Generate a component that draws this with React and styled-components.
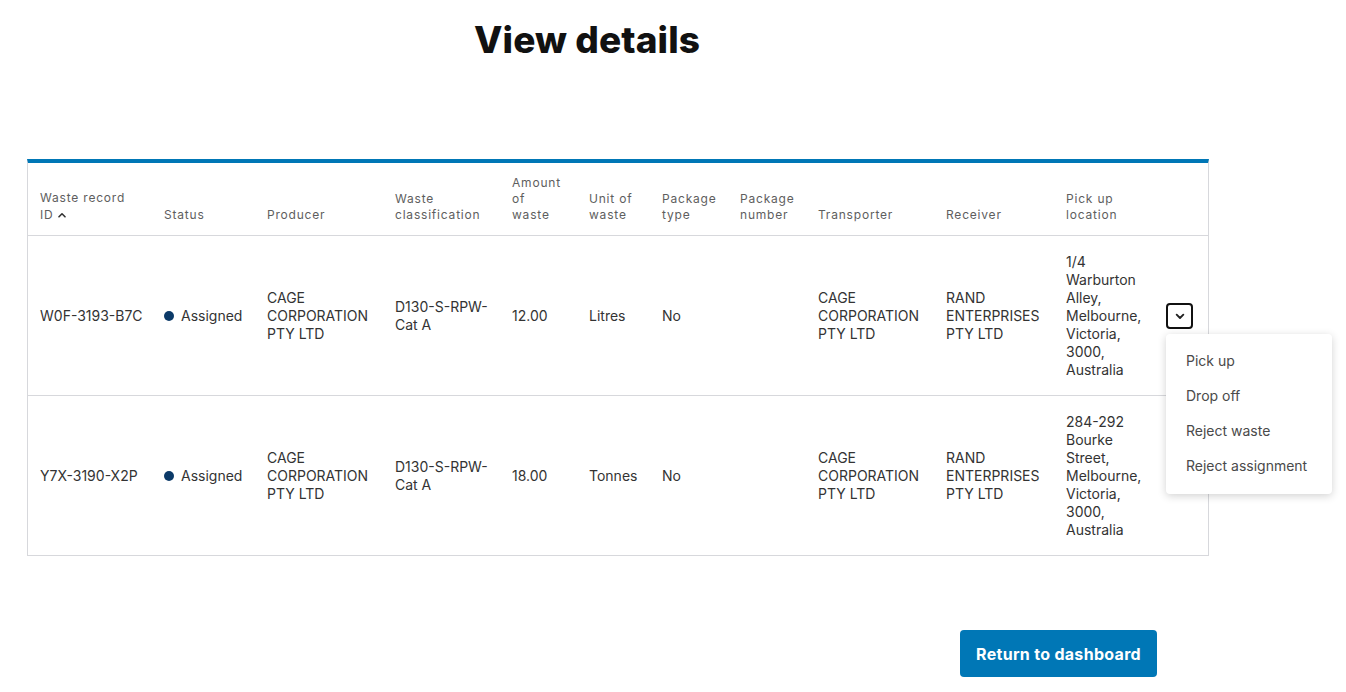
import { useState } from "react";
import styled, { createGlobalStyle } from "styled-components";

const GlobalStyle = createGlobalStyle`
  body {
    margin: 0;
    background: #ffffff;
    font-family: Inter, "Liberation Sans", Arial, sans-serif;
    color: #333333;
  }
`;

const columns = [
  { label: "Waste record ID", width: 124, sort: true },
  { label: "Status", width: 103 },
  { label: "Producer", width: 128 },
  { label: "Waste classification", width: 117 },
  { label: "Amount of waste", width: 77 },
  { label: "Unit of waste", width: 73 },
  { label: "Package type", width: 78 },
  { label: "Package number", width: 78 },
  { label: "Transporter", width: 128 },
  { label: "Receiver", width: 120 },
  { label: "Pick up location", width: 102 },
  { label: "", width: 52 },
];

const rows = [
  {
    id: "W0F-3193-B7C",
    status: "Assigned",
    producer: "CAGE CORPORATION PTY LTD",
    classification: "D130-S-RPW-Cat A",
    amount: "12.00",
    unit: "Litres",
    packageType: "No",
    packageNumber: "",
    transporter: "CAGE CORPORATION PTY LTD",
    receiver: "RAND ENTERPRISES PTY LTD",
    location: "1/4 Warburton Alley, Melbourne, Victoria, 3000, Australia",
  },
  {
    id: "Y7X-3190-X2P",
    status: "Assigned",
    producer: "CAGE CORPORATION PTY LTD",
    classification: "D130-S-RPW-Cat A",
    amount: "18.00",
    unit: "Tonnes",
    packageType: "No",
    packageNumber: "",
    transporter: "CAGE CORPORATION PTY LTD",
    receiver: "RAND ENTERPRISES PTY LTD",
    location: "284-292 Bourke Street, Melbourne, Victoria, 3000, Australia",
  },
];

const actions = ["Pick up", "Drop off", "Reject waste", "Reject assignment"];

const App = () => {
  const [openRow, setOpenRow] = useState(0);

  return (
    <>
      <GlobalStyle />
      <Page>
        <Title>View details</Title>
        <TableWrap>
          <Table>
            <colgroup>
              {columns.map((col, index) => (
                <col key={index} style={{ width: col.width }} />
              ))}
            </colgroup>
            <thead>
              <tr>
                {columns.map((col, index) => (
                  <HeadCell key={index}>
                    {col.label}
                    {col.sort && (
                      <SortArrow>
                        <svg width="8" height="6" viewBox="0 0 8 6" fill="none">
                          <path
                            d="M1 4.8L4 1.8l3 3"
                            stroke="#333"
                            strokeWidth="1.6"
                            strokeLinecap="round"
                            strokeLinejoin="round"
                          />
                        </svg>
                      </SortArrow>
                    )}
                  </HeadCell>
                ))}
              </tr>
            </thead>
            <tbody>
              {rows.map((row, index) => (
                <Row key={row.id}>
                  <Cell $nowrap>{row.id}</Cell>
                  <Cell>
                    <Status>
                      <Dot />
                      {row.status}
                    </Status>
                  </Cell>
                  <Cell>{row.producer}</Cell>
                  <Cell>{row.classification}</Cell>
                  <Cell>{row.amount}</Cell>
                  <Cell>{row.unit}</Cell>
                  <Cell>{row.packageType}</Cell>
                  <Cell>{row.packageNumber}</Cell>
                  <Cell>{row.transporter}</Cell>
                  <Cell>{row.receiver}</Cell>
                  <Cell>{row.location}</Cell>
                  <ActionCell>
                    <MenuAnchor>
                      <ToggleButton
                        $active={openRow === index}
                        onClick={() =>
                          setOpenRow(openRow === index ? -1 : index)
                        }
                      >
                        <svg width="16" height="16" viewBox="0 0 24 24" fill="none">
                          <path
                            d="M7 10l5 5 5-5"
                            stroke="#222"
                            strokeWidth="2.8"
                            strokeLinecap="round"
                            strokeLinejoin="round"
                          />
                        </svg>
                      </ToggleButton>
                      {openRow === index && (
                        <Menu>
                          {actions.map((action) => (
                            <MenuItem key={action}>{action}</MenuItem>
                          ))}
                        </Menu>
                      )}
                    </MenuAnchor>
                  </ActionCell>
                </Row>
              ))}
            </tbody>
          </Table>
        </TableWrap>
        <Footer>
          <PrimaryButton>Return to dashboard</PrimaryButton>
        </Footer>
      </Page>
    </>
  );
};

const Page = styled.div`
  width: 1182px;
  padding: 18px 0 0 27px;
  display: flex;
  flex-direction: column;
`;

const Title = styled.h1`
  margin: 0 0 0 447px;
  font-size: 37px;
  line-height: 44px;
  font-weight: 800;
  color: #111111;
  letter-spacing: 0.1px;
`;

const TableWrap = styled.div`
  margin-top: 97px;
  border-top: 4px solid #0077b6;
  border-left: 1px solid #d7d8dc;
  border-right: 1px solid #d7d8dc;
  border-bottom: 1px solid #d7d8dc;
`;

const Table = styled.table`
  width: 100%;
  table-layout: fixed;
  border-collapse: collapse;
`;

const HeadCell = styled.th`
  text-align: left;
  vertical-align: bottom;
  padding: 12px;
  font-size: 12px;
  line-height: 16px;
  font-weight: 400;
  letter-spacing: 0.8px;
  color: #5e5e5e;
  border-bottom: 1px solid #d7d8dc;
`;

const SortArrow = styled.span`
  display: inline-block;
  margin-left: 5px;
  vertical-align: 1px;
`;

const Row = styled.tr`
  & + & td {
    border-top: 1px solid #d7d8dc;
  }
`;

const Cell = styled.td`
  padding: 17px 12px 16px;
  vertical-align: middle;
  font-size: 14px;
  line-height: 18px;
  color: #333333;
  word-wrap: break-word;
  white-space: ${(props) => (props.$nowrap ? "nowrap" : "normal")};
`;

const ActionCell = styled(Cell)`
  padding: 0 0 0 10px;
`;

const Status = styled.span`
  display: inline-flex;
  align-items: center;
  gap: 7px;
`;

const Dot = styled.span`
  width: 10px;
  height: 10px;
  border-radius: 50%;
  background: #0c3a68;
`;

const MenuAnchor = styled.div`
  position: relative;
  width: 27px;
`;

const ToggleButton = styled.button`
  width: 27px;
  height: 26px;
  padding: 0;
  display: flex;
  align-items: center;
  justify-content: center;
  background: #ffffff;
  border: 2px solid ${(props) => (props.$active ? "#111111" : "transparent")};
  border-radius: 4px;
  cursor: pointer;
`;

const Menu = styled.div`
  position: absolute;
  top: 31px;
  left: 0;
  width: 166px;
  padding: 10px 0;
  background: #ffffff;
  border-radius: 4px;
  box-shadow: 0 2px 8px rgba(0, 0, 0, 0.18);
  z-index: 2;
`;

const MenuItem = styled.div`
  padding: 0 20px;
  height: 35px;
  display: flex;
  align-items: center;
  font-size: 14px;
  color: #4a4a4a;
  white-space: nowrap;
  cursor: pointer;

  &:hover {
    background: #f2f2f2;
  }
`;

const Footer = styled.div`
  display: flex;
  justify-content: flex-end;
  padding-right: 52px;
  margin-top: 74px;
`;

const PrimaryButton = styled.button`
  width: 197px;
  height: 47px;
  border: none;
  border-radius: 4px;
  background: #0077b6;
  color: #ffffff;
  font-family: Inter, "Liberation Sans", Arial, sans-serif;
  font-size: 16px;
  font-weight: 700;
  letter-spacing: 0.3px;
  cursor: pointer;
`;

export default App;
